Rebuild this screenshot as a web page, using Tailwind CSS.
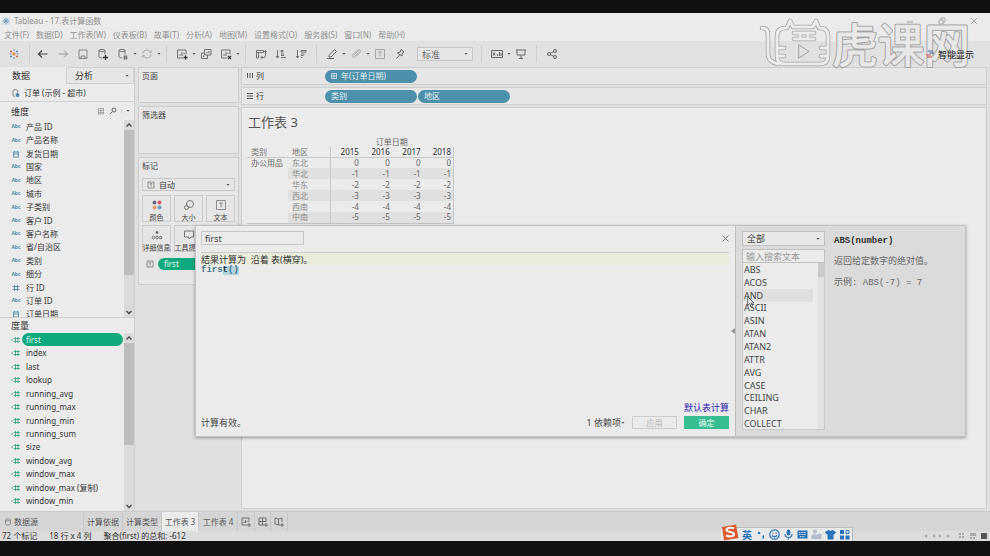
<!DOCTYPE html>
<html lang="zh-CN">
<head>
  <meta charset="UTF-8">
  <title>Tableau - 17.表计算函数</title>
  <script src="https://cdn.jsdelivr.net/npm/@tailwindcss/browser@4"></script>
</head>
<body class="relative flex h-screen flex-col overflow-hidden bg-[#101010] pt-[13px] pb-[15px] font-['Noto_Sans','Noto_Sans_CJK_SC',sans-serif] text-[8px] leading-none text-[#444] whitespace-nowrap">

  <!-- Iconos compartidos -->
  <svg class="hidden">
    <symbol id="caret" viewBox="0 0 4 4"><path d="M.4 1h3.200L2 2.800z" fill="#555"/></symbol>
    <symbol id="up" viewBox="0 0 10 10"><path d="M2.500 6.500 5 4l2.500 2.500" fill="none" stroke="#444" stroke-width="1.300"/></symbol>
    <symbol id="down" viewBox="0 0 10 10"><path d="M2.500 4 5 6.500 7.500 4" fill="none" stroke="#444" stroke-width="1.300"/></symbol>
    <symbol id="hash" viewBox="0 0 8 8"><path d="M2.500 1v6M5.500 1v6M.500 2.500h7M.500 5.500h7" fill="none" stroke="currentColor" stroke-width=".8"/></symbol>
    <symbol id="calcHash" viewBox="0 0 9 8"><path d="M4.500 1v6M7 1v6M2.500 2.500h6.500M2.500 5.500h6.500M0 4h2" fill="none" stroke="currentColor" stroke-width=".8"/></symbol>
    <symbol id="date" viewBox="0 0 8 8"><path d="M1.500 2h5v5h-5zM1.500 4h5M2.500 1v1M5.500 1v1" fill="none" stroke="currentColor" stroke-width=".8"/></symbol>
    <symbol id="textBox" viewBox="0 0 12 12"><path d="M1.500 1.500h9v9h-9zM4 4h4M6 4v4.500" fill="none" stroke="currentColor" stroke-width=".8"/></symbol>
  </svg>

  <!-- Título y menú -->
  <header class="bg-[#ebebeb] text-[#929292]">
    <div class="flex h-[15px] items-center justify-between pl-0.5 pr-3">
      <div class="flex items-center gap-1">
        <svg class="size-2" viewBox="0 0 8 8"><path d="M0 0h8v8H0z" fill="#d3dde4"/><path d="M4 1v6M1 4h6M2 2l4 4M6 2 2 6" stroke="#6695b5" stroke-width=".8"/></svg>
        <h1 class="text-[8px]">Tableau - 17.表计算函数</h1>
      </div>
      <div class="flex items-center gap-6">
        <button aria-label="最小化"><svg class="size-2" viewBox="0 0 8 8"><path d="M1 5h6" stroke="#999"/></svg></button>
        <button aria-label="还原"><svg class="size-2" viewBox="0 0 8 8"><path d="M1 3h4v4H1zM3 3V1h4v4H5" fill="none" stroke="#999" stroke-width=".8"/></svg></button>
        <button aria-label="关闭"><svg class="size-2" viewBox="0 0 8 8"><path d="m1 1 6 6M7 1 1 7" stroke="#999" stroke-width=".8"/></svg></button>
      </div>
    </div>
    <nav class="flex h-[13px] items-center gap-[7px] pl-1">
      <a href="#">文件(F)</a><a href="#">数据(D)</a><a href="#">工作表(W)</a><a href="#">仪表板(B)</a><a href="#">故事(T)</a><a href="#">分析(A)</a><a href="#">地图(M)</a><a href="#">设置格式(O)</a><a href="#">服务器(S)</a><a href="#">窗口(N)</a><a href="#">帮助(H)</a>
    </nav>
  </header>

  <!-- Barra de herramientas -->
  <div class="flex h-[26px] shrink-0 items-center bg-[#e1e1e1] pl-1 text-[#666] [&>button]:flex [&>button]:w-5 [&>button]:justify-center [&>i]:mx-[5px] [&>i]:h-[18px] [&>i]:w-px [&>i]:bg-[#cfcfcf] [&>svg]:size-1 [&_button_svg]:size-3 [&_button_svg]:fill-none [&_button_svg]:stroke-current">
    <button aria-label="起始页"><svg viewBox="0 0 12 12"><path d="M6 4v4M4 6h4" stroke="#e08030"/><path d="M6 1v2M6 9v2" stroke="#7089b5"/><path d="M1.500 6h2M8.500 6h2" stroke="#8c86b5"/><path d="M3 2.500v2M2 3.500h2M9 7.500v2M8 8.500h2" stroke="#c66c4c"/><path d="M9 2.500v2M8 3.500h2M3 7.500v2M2 8.500h2" stroke="#5990a8"/></svg></button>
    <i class="mr-[3px]!"></i>
    <button aria-label="撤消" class="text-[#444]"><svg viewBox="0 0 12 12"><path d="M10.500 6h-9M5 2.500 1.500 6 5 9.500" stroke-width="1.200"/></svg></button>
    <button aria-label="重做" class="text-[#999]"><svg viewBox="0 0 12 12"><path d="M1.500 6h9M7 2.500 10.500 6 7 9.500"/></svg></button>
    <button aria-label="保存" class="text-[#888]"><svg viewBox="0 0 12 12"><path d="M2 2h8v8.500H2zM4 10.500V8h4v2.500"/></svg></button>
    <button aria-label="新建数据源"><svg viewBox="0 0 12 12"><path d="M2 2.500c0-1.500 6-1.500 6 0s-6 1.500-6 0v6c0 1 2 1.500 3.500 1.300M8 2.500v4" stroke-width=".9"/><path d="M8.500 7v5M6 9.500h5" stroke="#333" stroke-width="1.300"/></svg></button>
    <button aria-label="暂停更新"><svg viewBox="0 0 12 12"><path d="M2 2.500c0-1.500 6-1.500 6 0s-6 1.500-6 0v6c0 1 2 1.500 3.500 1.300M8 2.500v4" stroke-width=".9"/><path d="M7.500 7.500v4M9.500 7.500v4" stroke-width="1.500"/></svg></button>
    <svg><use href="#caret"/></svg>
    <button aria-label="刷新" class="text-[#aaa]"><svg viewBox="0 0 12 12"><path d="M1.800 5.500a4.200 4.200 0 0 1 8-1M10.200 6.500a4.200 4.200 0 0 1-8 1M8.300 4.500h2V2.500M3.700 7.500h-2v2"/></svg></button>
    <svg><use href="#caret"/></svg>
    <i></i>
    <button aria-label="新建工作表"><svg viewBox="0 0 12 12"><path d="M7 10H1.500V2h8.500v4.500M4 8V6M6 8V4M8 6.500V5" stroke-width=".9"/><path d="M9.500 7.500v4M7.500 9.500h4" stroke="#333" stroke-width="1.300"/></svg></button>
    <svg><use href="#caret"/></svg>
    <button aria-label="复制"><svg viewBox="0 0 12 12"><path d="M4.500 1.500h6.500v5.500H4.500zM4.500 5h-3v5.500h6V7M7 5.500V4M9 5.500V3M3.500 9V7.500" stroke-width=".9"/></svg></button>
    <button aria-label="清除"><svg viewBox="0 0 12 12"><path d="M7 10H1.500V2h8.500v4.500M4 8V6M6 8V4M8 6V5" stroke-width=".9"/><path d="m8 8 3 3M11 8l-3 3" stroke="#333" stroke-width="1.200"/></svg></button>
    <svg><use href="#caret"/></svg>
    <i></i>
    <button aria-label="交换行和列"><svg viewBox="0 0 12 12"><path d="M1.500 2.500h7v2h-7zM1.500 4.500v5.500h2V4.500M10.500 2.500v5q0 2-2 2H6M7.500 8 6 9.500 7.500 11M9.200 4l1.300-1.500L11.800 4" stroke-width=".9"/></svg></button>
    <button aria-label="升序"><svg viewBox="0 0 12 12"><path d="M2.500 2v8M1 8l1.500 2L4 8M6 2.500h2v1.500H6zM6 6h3M6 7.500h3M6 9.500h5" stroke-width=".9"/></svg></button>
    <button aria-label="降序"><svg viewBox="0 0 12 12"><path d="M2.500 2v8M1 8l1.500 2L4 8M6 2.500h5v1.500H6zM6 6h3.500M6 7.500h2.500M6 9.500h1.500" stroke-width=".9"/></svg></button>
    <i></i>
    <button aria-label="突出显示"><svg viewBox="0 0 12 12"><path d="M3 7.500 8.500 1.500l2 2L5 9H3zM1 10.500h7"/></svg></button>
    <svg><use href="#caret"/></svg>
    <button aria-label="分组成员" class="text-[#aaa]"><svg viewBox="0 0 12 12"><path d="m3.500 7.500 4-4c1-1 2 0 1 1L4.800 8.800c-1.500 1.500-3.500-.5-2-2l4.500-4.500c2-2 4.500.5 2.500 2.500L6.500 8"/></svg></button>
    <svg><use href="#caret"/></svg>
    <button aria-label="显示标记标签" class="text-[#999]"><svg viewBox="0 0 12 12"><use href="#textBox"/></svg></button>
    <button aria-label="固定轴"><svg viewBox="0 0 12 12"><path d="m7 1.500 3 2.500-2 1.500v2.500L3.500 5l2.500-.8zM5.500 7 2.500 10.500"/></svg></button>
    <div class="relative ml-[7px] flex h-[14px] w-14 items-center border border-[#c6c6c6] bg-[#e6e6e6]">
      <select aria-label="适合" class="w-full appearance-none pl-1 text-[9px] outline-none"><option>标准</option></select>
      <svg class="absolute right-1 size-1"><use href="#caret"/></svg>
    </div>
    <i class="ml-2!"></i>
    <button aria-label="显示卡"><svg viewBox="0 0 12 12"><path d="M.500 2.500h11v7H.500zM2 4.500l2 3M4 4.500l-2 3M6.500 8V6M8.500 8V4M10 8V5"/></svg></button>
    <svg><use href="#caret"/></svg>
    <button aria-label="演示模式"><svg viewBox="0 0 12 12"><path d="M1 2h10M2 2v5h8V2M6 7v3M4 10.500h4"/></svg></button>
    <i></i>
    <button aria-label="共享"><svg viewBox="0 0 12 12"><circle cx="3" cy="6" r="1.500"/><circle cx="9" cy="3" r="1.500"/><circle cx="9" cy="9" r="1.500"/><path d="m4.300 5.300 3.400-1.600M4.300 6.700l3.400 1.600"/></svg></button>
    <a href="#" class="relative z-10 mr-4 ml-auto flex items-center gap-1 text-[9px] text-[#222]">
      <svg class="size-2" viewBox="0 0 8 8"><path d="M2 1h5M3 3h5" stroke="#4a6fa5"/><path d="M0 5h5M1 7h5" stroke="#c0504d"/></svg>智能显示
    </a>
  </div>

  <main class="flex min-h-0 flex-1 bg-[#e0e0e0]">
    <!-- Panel de datos -->
    <aside class="flex w-[135px] flex-col border-r border-[#cfcfcf] bg-[#ebebeb] text-[#333]">
      <div class="flex h-[17px] shrink-0 text-[9px]">
        <button class="w-[66px] pr-6">数据</button>
        <button class="flex flex-1 items-center justify-between border border-[#cfcfcf] bg-[#e6e6e6] pr-1 pl-2">分析<svg class="size-1"><use href="#caret"/></svg></button>
      </div>
      <div class="flex h-[18px] shrink-0 items-center gap-1 border-b border-[#d2d2d2] pl-3">
        <svg class="size-2" viewBox="0 0 8 8"><path d="M1 1.500c0-1 4.500-1 4.500 0v2M1 1.500v5c0 .5 1 .8 2 .8" fill="none" stroke="#666" stroke-width=".8"/><circle cx="5.500" cy="6" r="2" fill="#4c8ca8"/></svg>
        订单 (示例 - 超市)
      </div>
      <div class="flex h-[18px] shrink-0 items-center pr-1 pl-[11px]">
        <h2 class="flex-1 text-[9px]">维度</h2>
        <button aria-label="查看数据"><svg class="size-2" viewBox="0 0 8 8"><path d="M1 1.500h6M1 3.500h6M1 5.500h6M1 7h6M1.500 1v6M4 1v6M6.500 1v6" stroke="#888" stroke-width=".6"/></svg></button>
        <button aria-label="查找字段" class="mx-1"><svg class="size-2" viewBox="0 0 8 8"><circle cx="5" cy="3" r="2" fill="none" stroke="#666"/><path d="M3.500 4.500 1 7" stroke="#666"/></svg></button>
        <button aria-label="维度菜单" class="border-l border-[#d0d0d0] pl-1"><svg class="size-1"><use href="#caret"/></svg></button>
      </div>
      <div class="flex h-[197px] shrink-0 overflow-hidden">
        <ul id="dimensions" class="flex h-[201px] flex-1 flex-col"></ul>
        <div class="flex w-[10px] flex-col bg-[#dadada]">
          <svg class="size-[10px]"><use href="#up"/></svg>
          <div class="h-[145px] bg-[#bdbdbd]"></div>
          <svg class="mt-auto size-[10px]"><use href="#down"/></svg>
        </div>
      </div>
      <h2 class="flex h-4 shrink-0 items-center border-t border-[#cfcfcf] pl-[11px] text-[9px]">度量</h2>
      <div class="flex flex-1">
        <ul id="measures" class="flex h-[175px] flex-1 flex-col"></ul>
        <div class="flex w-[10px] flex-col bg-[#dadada]">
          <svg class="size-[10px]"><use href="#up"/></svg>
          <div class="h-[102px] bg-[#bdbdbd]"></div>
          <svg class="mt-auto size-[10px]"><use href="#down"/></svg>
        </div>
      </div>
    </aside>

    <!-- Tarjetas -->
    <section class="ml-[3px] flex w-[101px] flex-col gap-[3px] [&>div]:border [&>div]:border-[#cdcdcd] [&>div]:bg-[#e6e6e6] [&>div]:px-[3px] [&>div]:pt-1">
      <div class="h-9">页面</div>
      <div class="h-12">筛选器</div>
      <div class="h-[128px]">
        <h3>标记</h3>
        <div class="relative mt-2 flex h-[13px] items-center gap-0.5 border border-[#c8c8c8] pl-1">
          <svg class="size-2"><use href="#textBox"/></svg>
          <select aria-label="标记类型" class="flex-1 appearance-none pl-0.5 text-[8px] outline-none"><option>自动</option></select>
          <svg class="absolute right-1 size-1"><use href="#caret"/></svg>
        </div>
        <div class="mt-1 grid grid-cols-3 gap-[3px] [&>button]:flex [&>button]:h-[27px] [&>button]:flex-col [&>button]:items-center [&>button]:justify-between [&>button]:border [&>button]:border-[#cbcbcb] [&>button]:pt-[3px] [&>button]:text-[7px] [&_svg]:size-3">
          <button><svg viewBox="0 0 12 12"><circle cx="3.500" cy="3.500" r="2" fill="#6b6689"/><circle cx="8.500" cy="3.500" r="2" fill="#d85a62"/><circle cx="3.500" cy="8.500" r="2" fill="#e39a72"/><circle cx="8.500" cy="8.500" r="2" fill="#6a9cc0"/></svg>颜色</button>
          <button><svg viewBox="0 0 12 12" fill="none" stroke="#777"><circle cx="7" cy="5" r="3.500"/><circle cx="3.500" cy="8.500" r="2"/></svg>大小</button>
          <button><svg class="text-[#777]"><use href="#textBox"/></svg>文本</button>
          <button><svg viewBox="0 0 12 12" fill="none" stroke="#666" stroke-width=".9"><circle cx="6" cy="3.500" r="1" fill="#666"/><circle cx="2.500" cy="8.500" r="1.300"/><circle cx="6" cy="8.500" r="1.300"/><circle cx="9.500" cy="8.500" r="1.300"/></svg>详细信息</button>
          <button><svg viewBox="0 0 12 12" fill="none" stroke="#777"><path d="M1.500 2h9v6H8L6 10V8H1.500z"/></svg>工具提示</button>
        </div>
        <div class="mt-1.5 flex items-center gap-1 pl-1">
          <svg class="size-2"><use href="#textBox"/></svg>
          <div class="flex h-3 flex-1 items-center rounded-full bg-[#0fa97e] pl-1.5 text-[#e8f5f0]">first</div>
        </div>
      </div>
    </section>

    <!-- Estantes y hoja -->
    <section class="mr-[3px] ml-0.5 flex flex-1 flex-col gap-0.5 pb-0.5">
      <div class="flex h-[18px] shrink-0 items-center border border-[#cdcdcd] bg-[#e6e6e6] pl-1">
        <div class="flex w-[79px] items-center gap-0.5"><svg class="size-2" viewBox="0 0 8 8"><path d="M1.500 1v5M4 1v5M6.500 1v5" stroke="#555"/></svg>列</div>
        <div class="flex h-[13px] w-[92px] items-center gap-1 rounded-full bg-[#4c90ab] pl-1.5 text-[#e9f1f4]"><svg class="size-1.5" viewBox="0 0 6 6"><path d="M.500.500h5v5h-5zM3 .500v5M.500 3h5" fill="none" stroke="#e9f1f4" stroke-width=".7"/></svg>年(订单日期)</div>
      </div>
      <div class="flex h-[18px] shrink-0 items-center border border-[#cdcdcd] bg-[#e6e6e6] pl-1">
        <div class="flex w-[79px] items-center gap-0.5"><svg class="size-2" viewBox="0 0 8 8"><path d="M1 1.500h6M1 4h6M1 6.500h6" stroke="#555"/></svg>行</div>
        <div class="flex h-[13px] w-[92px] items-center rounded-full bg-[#4c90ab] pl-1.5 text-[#e9f1f4]">类别</div>
        <div class="ml-px flex h-[13px] w-[92px] items-center rounded-full bg-[#4c90ab] pl-1.5 text-[#e9f1f4]">地区</div>
      </div>
      <div class="flex-1 border border-[#cdcdcd] bg-[#ebebeb] pl-[5px]">
        <h2 class="flex h-7 items-center pl-px text-[13px] text-[#555]">工作表 3</h2>
        <table class="mt-px w-[207px] table-fixed border-collapse text-[#666] [&_td]:p-0 [&_th]:p-0 [&_th]:font-normal">
          <thead class="[&_tr]:h-[10px]">
            <tr><th class="w-[41px]"></th><th class="w-[42px]"></th><th colspan="4">订单日期</th></tr>
            <tr class="border-b border-[#c8c8c8] text-[#333]"><th class="pl-1! text-left text-[#777]">类别</th><th class="border-r border-[#c8c8c8] pl-1! text-left text-[#777]">地区</th><th class="pr-0.5! text-right">2015</th><th class="pr-0.5! text-right">2016</th><th class="pr-0.5! text-right">2017</th><th class="border-r border-[#c8c8c8] pr-0.5! text-right">2018</th></tr>
          </thead>
          <tbody id="rows" class="border-b border-[#c8c8c8]"></tbody>
        </table>
      </div>
    </section>
  </main>

  <!-- Pestañas de hojas -->
  <div class="flex h-5 shrink-0 border-t border-[#cacaca] bg-[#d5d5d5] text-[#555] [&>button]:flex [&>button]:items-center [&>button]:justify-center [&>button]:border-r [&>button]:border-[#c8c8c8]">
    <button class="w-[84px] justify-start! gap-0.5 pl-1"><svg class="size-2" viewBox="0 0 8 8"><path d="M1.500 2c0-1.500 5-1.500 5 0v4c0 1.500-5 1.500-5 0zM1.500 2c0 1.200 5 1.200 5 0" fill="none" stroke="#777" stroke-width=".8"/></svg>数据源</button>
    <button class="w-[39px]">计算依据</button>
    <button class="w-[39px]">计算类型</button>
    <button class="w-[37px] bg-[#ebebeb]">工作表 3</button>
    <button class="w-[39px]">工作表 4</button>
    <button class="w-[17px]" aria-label="新建工作表"><svg class="size-[10px]" viewBox="0 0 10 10" fill="none" stroke="#666" stroke-width=".9"><path d="M6 8H1V1h7v4M3 6V4.500M4.500 6V3M6 5V4M8 6v4M6 8h4"/></svg></button>
    <button class="w-4" aria-label="新建仪表板"><svg class="size-[10px]" viewBox="0 0 10 10" fill="none" stroke="#666" stroke-width=".9"><path d="M6 8H1V1h7v4M4.500 1v7M1 4.500h7M8 6v4M6 8h4"/></svg></button>
    <button class="w-[17px]" aria-label="新建故事"><svg class="size-[10px]" viewBox="0 0 10 10" fill="none" stroke="#666" stroke-width=".9"><path d="M4.500 2 1 1v6l3.500 1zM4.500 2 8 1v4M4.500 8H6M8 6v4M6 8h4"/></svg></button>
  </div>

  <!-- Barra de estado -->
  <footer class="flex h-[10px] shrink-0 items-center gap-3 overflow-hidden bg-[#dcdcdc] pl-0.5 text-[#333]">
    <span>72 个标记</span><span>18 行 x 4 列</span><span>聚合(first) 的总和: -612</span>
    <div class="ml-auto flex items-center gap-[3px] pr-0.5">
      <svg class="mr-1 h-2 w-7" viewBox="0 0 28 8"><path d="M0 2.500v3M4 2.500v3L1.500 4zM12 2.500v3L9.500 4zM16 2.500v3L18.500 4zM24 2.500v3L26.500 4zM27 2.500v3" fill="#aaa" stroke="#aaa" stroke-width=".4"/></svg>
      <svg class="size-2" viewBox="0 0 8 8"><path d="M1 1h2v2H1zM4 1h2v2H4zM1 4h2v2H1zM4 4h2v2H4z" fill="#aaa"/></svg>
      <svg class="size-2" viewBox="0 0 8 8"><path d="M1 1h6v3H1zM1 5h2v2H1zM4 5h2v2H4z" fill="#aaa"/></svg>
      <svg class="size-2" viewBox="0 0 8 8"><path d="M1 1h6v6H1z" fill="#555"/></svg>
    </div>
  </footer>

  <!-- Editor de cálculo -->
  <div role="dialog" aria-label="first" class="absolute top-[225px] left-[195px] flex h-[212px] w-[771px] border border-[#c4c4c4] bg-[#ebebeb] text-[9px] shadow-[0_1px_3px_rgba(0,0,0,0.35)]">
    <div class="flex flex-1 flex-col pt-[5px] pr-0.5 pl-[5px]">
      <div class="flex h-[21px] items-start justify-between">
        <input aria-label="计算名称" value="first" class="h-[14px] w-[103px] border border-[#c6c6c6] px-[3px] outline-none">
        <button aria-label="关闭" class="pt-1"><svg class="size-[7px]" viewBox="0 0 7 7"><path d="m.500.500 6 6M6.500.500l-6 6" stroke="#666" stroke-width=".9"/></svg></button>
      </div>
      <div class="flex h-[13px] items-center border-t border-[#cbcbcb] bg-[#e9ebdb] whitespace-pre text-[#333]">结果计算为  沿着 表(横穿)。</div>
      <div class="flex h-[10px] items-center font-['Liberation_Mono','Noto_Sans_CJK_SC',monospace] font-bold text-[#47768e]">firs<span class="bg-[#b3d4de] text-[#234]">t</span><span class="bg-[#b3d4de]">()</span></div>
      <a href="#" class="mt-auto self-end text-[#3023b0]">默认表计算</a>
      <div class="mt-1 mb-[7px] flex h-[13px] items-center gap-[7px]">
        <span class="mr-auto">计算有效。</span>
        <button class="flex items-center">1 依赖项<svg class="size-1"><use href="#caret"/></svg></button>
        <button class="h-[13px] w-[45px] border border-[#cbcbcb] text-[8px] text-[#b5b5b5]">应用</button>
        <button class="h-[13px] w-[45px] bg-[#37bd92] text-[8px] text-[#e5f5ef]">确定</button>
      </div>
    </div>
    <svg class="h-2 w-1 self-center" viewBox="0 0 4 8"><path d="M4 1v6L0 4z" fill="#999"/></svg>
    <div class="flex w-[230px] border-l border-[#bcbcbc] bg-[#dbdbdb] pt-[5px] pl-1.5">
      <div class="flex w-[83px] flex-col">
        <div class="relative flex h-[15px] shrink-0 items-center border border-[#c0c0c0] bg-[#e8e8e8]">
          <select aria-label="函数类别" class="w-full appearance-none pl-1 text-[9px] outline-none"><option>全部</option></select>
          <svg class="absolute right-1 size-1"><use href="#caret"/></svg>
        </div>
        <input aria-label="搜索函数" placeholder="输入搜索文本" class="mt-[3px] h-[14px] border border-[#c0c0c0] bg-[#ebebeb] px-[3px] outline-none placeholder:text-[#999]">
        <div class="flex h-[167px] overflow-hidden border-x border-b border-[#c8c8c8] bg-[#ebebeb]">
          <ul id="functions" class="mr-[5px] flex h-[167px] flex-1 flex-col"></ul>
          <div class="w-1.5 bg-[#e2e2e2]"><div class="h-[14px] bg-[#cbcbcb]"></div></div>
        </div>
      </div>
      <div class="flex flex-col gap-3 pt-1.5 pl-[9px] font-['Liberation_Mono','Noto_Sans_CJK_SC',monospace] text-[#666]">
        <b class="text-[#333]">ABS(number)</b>
        <p>返回给定数字的绝对值。</p>
        <p>示例: ABS(-7) = 7</p>
      </div>
    </div>
  </div>

  <!-- Cursor -->
  <svg class="absolute top-[296px] left-[747px] h-3 w-2" viewBox="0 0 8 12"><path d="M.700.800v8.500l2-1.800 1.500 3.300 1.300-.6L4.200 7h2.700z" fill="#eee" stroke="#444" stroke-width=".8"/></svg>

  <!-- Marca de agua -->
  <svg class="absolute top-[18px] right-[16px] h-[51px] w-[216px]" viewBox="0 0 216 51" fill="none" stroke-linecap="round" stroke-linejoin="round" aria-label="虎课网">
    <defs>
      <path id="cat" d="M4 10c6 0 6 4 6 10v14c0 8 3 10 10 12M29 10l3-7 3 6h20l3-6 3 7h1q8 0 8 8v20q0 8-8 8H27q-8 0-8-8V18q0-8 8-8zM36 15h20M36 21h20M42 15v6M50 15v6M20 30h6M20 38h6M63 30h6M63 38h6"/>
    </defs>
    <use href="#cat" stroke="#a2a2a2" stroke-width="4.500"/>
    <use href="#cat" stroke="#ececec" stroke-width="3"/>
    <path d="m41 27 10 6.500L41 40z" stroke="#a2a2a2"/>
    <text x="74" y="44" class="font-['Noto_Sans_CJK_SC',sans-serif] text-[46px]" stroke="#a2a2a2" stroke-width="3">虎课网</text>
    <text x="74" y="44" class="font-['Noto_Sans_CJK_SC',sans-serif] text-[46px]" fill="#e8e8e8" stroke="#e8e8e8" stroke-width="1">虎课网</text>
  </svg>

  <!-- Barra del método de entrada -->
  <div class="absolute bottom-[15px] left-[721px] flex h-[14px] w-[132px] items-center gap-[3px] border-t border-r border-[#bbb] bg-[#e9e9e9] text-[#2673b8] [&>svg]:size-[11px]">
    <svg class="-mt-1 h-[17px]! w-[18px]!" viewBox="0 0 18 17"><path d="m1 3 14-2.500L17.500 14 3 16.500z" fill="#dd5a30"/><path d="M13 4.500c-3-1.500-7.500-.5-7.500 1.500 0 2.500 7.500 1.500 7.500 4s-5 3-8 1.500" fill="none" stroke="#f3f3f3" stroke-width="2.200"/></svg>
    <b class="text-[10px]">英</b>
    <svg viewBox="0 0 11 11"><circle cx="4" cy="4" r="1.300" fill="#2673b8"/><path d="M8 6.500q1 1.500-.5 3" stroke="#2673b8" stroke-width="1.500" fill="none"/></svg>
    <svg viewBox="0 0 11 11" fill="none" stroke="#2673b8" stroke-width="1.200"><circle cx="5.500" cy="5.500" r="4.700"/><path d="M4 3.500v1.200M7 3.500v1.200M3 6.500q2.500 2.500 5 0"/></svg>
    <svg viewBox="0 0 11 11"><rect x="3.700" y=".5" width="3.600" height="6" rx="1.800" fill="#2673b8"/><path d="M2 5q0 3.500 3.500 3.500T9 5M5.500 8.500v2" fill="none" stroke="#2673b8" stroke-width="1.200"/></svg>
    <svg viewBox="0 0 11 11"><path d="M.500 1.500h10v8H.500z" fill="#2673b8"/><path d="M2 3.500h7M2 5.500h7M3 7.700h5" stroke="#e9e9e9" stroke-dasharray="1 .6"/></svg>
    <svg viewBox="0 0 11 11"><circle cx="4" cy="2.500" r="2" fill="#b6bccb"/><path d="M.500 10V6.500q3.500-2.500 6 0V10zM6 5h4.500v5H6z" fill="#b6bccb"/></svg>
    <svg viewBox="0 0 11 11"><path d="M3.500 1q2 1.500 4 0L11 3 9.500 5.500 8.500 5v5.500h-6V5l-1 .5L0 3z" fill="#2673b8"/></svg>
    <svg viewBox="0 0 11 11"><path d="M1 1h4v4H1zM1 6.500h4v4H1zM6.500 6.500h4v4h-4z" fill="#2673b8"/><path d="M7 1.500h3v3H7z" fill="none" stroke="#2673b8"/></svg>
  </div>

  <script>
    // Campos: [tipo, nombre]
    const dimensions = [
      ['abc', '产品 ID'], ['abc', '产品名称'], ['date', '发货日期'], ['abc', '国家'], ['abc', '地区'],
      ['abc', '城市'], ['abc', '子类别'], ['abc', '客户 ID'], ['abc', '客户名称'], ['abc', '省/自治区'],
      ['abc', '类别'], ['abc', '细分'], ['hash', '行 ID'], ['abc', '订单 ID'], ['date', '订单日期']
    ];
    const measures = ['first', 'index', 'last', 'lookup', 'running_avg', 'running_max', 'running_min',
      'running_sum', 'size', 'window_avg', 'window_max', 'window_max (复制)', 'window_min'];
    const regions = ['东北', '华北', '华东', '西北', '西南', '中南'];
    const functions = ['ABS', 'ACOS', 'AND', 'ASCII', 'ASIN', 'ATAN', 'ATAN2', 'ATTR', 'AVG', 'CASE', 'CEILING', 'CHAR', 'COLLECT'];

    function fieldIcon(type) {
      if (type === 'abc') return '<span class="w-[10px] text-center text-[5px] font-bold text-[#4f8ba5]">Abc</span>';
      return `<svg class="h-2 w-[10px] text-[#3f8099]"><use href="#${type}"/></svg>`;
    }

    document.getElementById('dimensions').innerHTML = dimensions.map(([type, name]) =>
      `<li class="flex flex-1 items-center pl-[11px]">${fieldIcon(type)}<span class="pl-[5px]">${name}</span></li>`
    ).join('');

    document.getElementById('measures').innerHTML = measures.map((name, i) =>
      `<li class="flex flex-1 items-center pl-[11px]"><svg class="h-2 w-[9px] text-[#2f9c78]"><use href="#calcHash"/></svg>
        <span class="${i === 0 ? 'ml-0.5 mr-px flex h-[13px] flex-1 items-center rounded-full bg-[#0fa97e] pl-1 text-[#dff3ec]' : 'pl-1.5'}">${name}</span></li>`
    ).join('');

    document.getElementById('rows').innerHTML = regions.map((region, i) => {
      const stripe = i % 2 ? 'bg-[#e0e0e0]' : '';
      const value = i === 0 ? '0' : '-' + i;
      const cells = [0, 1, 2, 3].map(c =>
        `<td class="pr-0.5! text-right ${c === 3 ? 'border-r border-[#c8c8c8]' : ''} ${stripe}">${value}</td>`).join('');
      return `<tr class="h-[11px]"><td class="pl-1!">${i === 0 ? '办公用品' : ''}</td>
        <td class="border-r border-[#c8c8c8] pl-1! text-[#888] ${stripe}">${region}</td>${cells}</tr>`;
    }).join('');

    document.getElementById('functions').innerHTML = functions.map(name =>
      `<li class="flex flex-1 items-center pl-px ${name === 'AND' ? 'bg-[#e0e0e0]' : ''}">${name}</li>`
    ).join('');
  </script>
</body>
</html>
